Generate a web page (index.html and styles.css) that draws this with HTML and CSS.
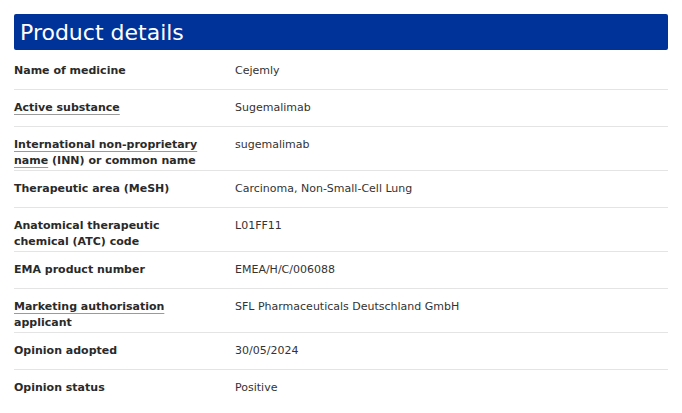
FILE: index.html
```html
<!DOCTYPE html>
<html>
<head>
<meta charset="utf-8">
<link rel="stylesheet" href="styles.css">
</head>
<body>
<div class="page">
  <h2 class="title">Product details</h2>
  <dl class="details">
    <div class="row"><dt>Name of medicine</dt><dd>Cejemly</dd></div>
    <div class="row"><dt><span class="term">Active substance</span></dt><dd>Sugemalimab</dd></div>
    <div class="row"><dt><span class="term">International non-proprietary</span> <span class="term">name</span> (INN) or common name</dt><dd>sugemalimab</dd></div>
    <div class="row"><dt>Therapeutic area (MeSH)</dt><dd>Carcinoma, Non-Small-Cell Lung</dd></div>
    <div class="row"><dt>Anatomical therapeutic chemical (ATC) code</dt><dd>L01FF11</dd></div>
    <div class="row"><dt>EMA product number</dt><dd>EMEA/H/C/006088</dd></div>
    <div class="row"><dt><span class="term">Marketing authorisation</span> applicant</dt><dd>SFL Pharmaceuticals Deutschland GmbH</dd></div>
    <div class="row"><dt>Opinion adopted</dt><dd>30/05/2024</dd></div>
    <div class="row last"><dt>Opinion status</dt><dd>Positive</dd></div>
  </dl>
</div>
</body>
</html>
```
FILE: styles.css
```css
html, body { margin: 0; padding: 0; background: #fff; }
body { font-family: "DejaVu Sans", Verdana, sans-serif; color: #333; }
.page { padding: 14px 14px 0 14px; }
.title {
  margin: 0 0 3px 0;
  background: #003399;
  color: #fff;
  font-weight: normal;
  font-size: 22px;
  line-height: 34px;
  height: 34px;
  padding: 2px 6px 0 6px;
  border-radius: 2px;
}
.details { margin: 0; }
.row {
  display: grid;
  grid-template-columns: 221px 1fr;
  align-items: start;
  border-bottom: 1px solid #e4e4e4;
}
.row.last { border-bottom: none; }
dt {
  margin: 0;
  font-weight: bold;
  font-size: 11px;
  line-height: 16px;
  color: #2a2a2a;
  padding: 10px 20px 1px 0;
}
dd {
  margin: 0;
  font-size: 11px;
  line-height: 16px;
  color: #333;
  padding: 10px 0 10px 0;
}
.term {
  text-decoration: underline;
  text-decoration-color: #9a9a9a;
  text-decoration-thickness: 1px;
  text-underline-offset: 3px;
}
```
